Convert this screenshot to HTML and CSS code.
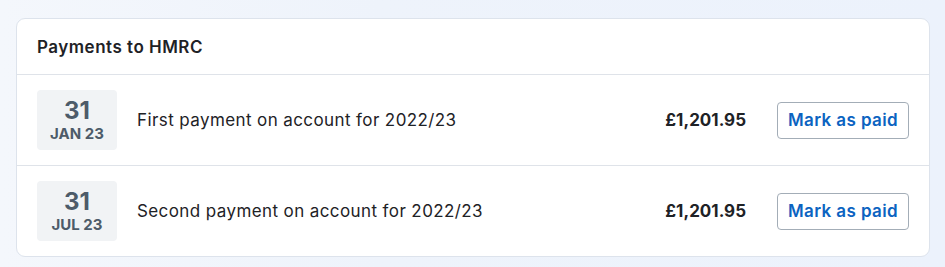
FILE: index.html
```html
<!DOCTYPE html>
<html lang="en">
<head>
<meta charset="utf-8">
<title>Payments to HMRC</title>
<link rel="stylesheet" href="styles.css">
</head>
<body>
<section class="card">
  <header class="card-header">Payments to HMRC</header>
  <div class="row">
    <div class="date"><span class="day">31</span><span class="month">JAN 23</span></div>
    <div class="desc">First payment on account for 2022/23</div>
    <div class="amount">£1,201.95</div>
    <button class="btn">Mark as paid</button>
  </div>
  <div class="row">
    <div class="date"><span class="day">31</span><span class="month">JUL 23</span></div>
    <div class="desc">Second payment on account for 2022/23</div>
    <div class="amount">£1,201.95</div>
    <button class="btn">Mark as paid</button>
  </div>
</section>
</body>
</html>
```
FILE: styles.css
```css
html, body {
  margin: 0;
  height: 100%;
}
body {
  background: linear-gradient(90deg, #f4f7fc 0%, #eef3fb 40%, #ecf2fc 100%);
  font-family: "Inter", "Noto Sans", sans-serif;
  color: #1e2226;
  padding: 18px 15px 0 16px;
  box-sizing: border-box;
}
.card {
  background: #fff;
  border: 1px solid #dde3ec;
  border-radius: 9px;
  overflow: hidden;
}
.card-header {
  height: 55px;
  display: flex;
  align-items: center;
  padding: 0 20px;
  font-size: 17px;
  font-weight: 600;
  letter-spacing: 0.5px;
  border-bottom: 1px solid #dfe3e9;
}
.row {
  display: flex;
  align-items: center;
  height: 90px;
  padding: 0 20px;
}
.row + .row {
  border-top: 1px solid #dfe3e9;
}
.date {
  width: 80px;
  height: 60px;
  background: #f1f3f5;
  border-radius: 4px;
  display: flex;
  flex-direction: column;
  align-items: center;
  justify-content: center;
  color: #4d5b69;
  font-weight: 700;
}
.day {
  font-size: 24px;
  line-height: 28px;
}
.month {
  font-size: 15px;
  line-height: 18px;
  margin-bottom: 1px;
}
.desc {
  flex: 1;
  margin-left: 20px;
  font-size: 17px;
  letter-spacing: 0.4px;
}
.amount {
  font-size: 17px;
  font-weight: 700;
  margin-right: 31px;
}
.btn {
  font-family: inherit;
  width: 132px;
  height: 37px;
  background: #fff;
  border: 1px solid #a3adb7;
  border-radius: 4px;
  color: #0b63c1;
  font-size: 17px;
  font-weight: 600;
  letter-spacing: 0.4px;
  padding: 0;
}
```
